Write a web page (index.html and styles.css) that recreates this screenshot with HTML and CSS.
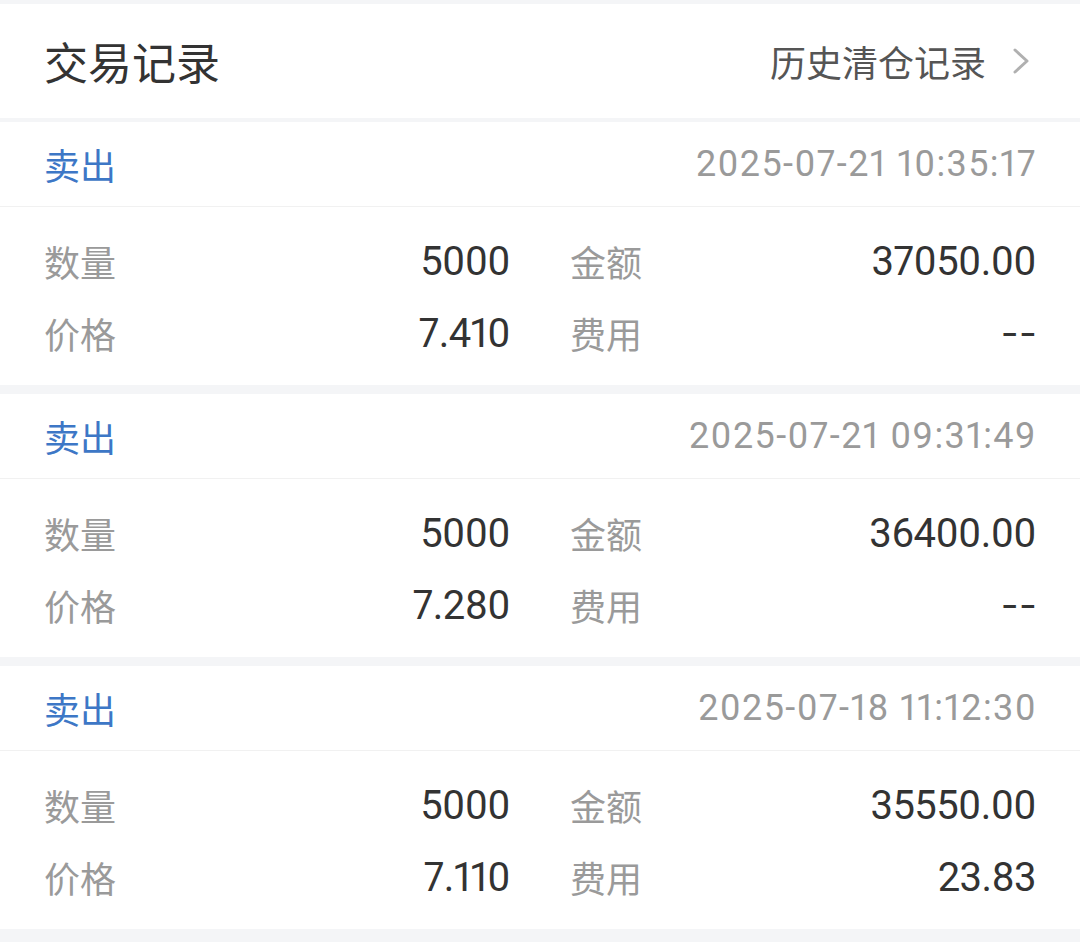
FILE: index.html
```html
<!DOCTYPE html>
<html lang="zh-CN">

<head>
    <title>交易记录</title>
    <meta charset="utf-8">
    <meta name="viewport" content="width=device-width, initial-scale=1">
    <link rel="stylesheet" href="styles.css">
</head>

<body>
    <div class="page">
        <div class="header">
            <h1>交易记录</h1>
            <a class="history" href="#">
                <span>历史清仓记录</span>
                <svg width="18" height="26" viewBox="0 0 18 26">
                    <polyline points="3,2 15,13 3,24" fill="none" stroke="#b0b0b0" stroke-width="3" stroke-linecap="round" stroke-linejoin="round" />
                </svg>
            </a>
        </div>

        <div class="card">
            <div class="card-top">
                <span class="side">卖出</span>
                <span class="time">2025-07-21 10:35:17</span>
            </div>
            <div class="card-body">
                <div class="cell"><span class="label">数量</span><span class="value">5000</span></div>
                <div class="cell"><span class="label">金额</span><span class="value">37050.00</span></div>
                <div class="cell"><span class="label">价格</span><span class="value">7.410</span></div>
                <div class="cell"><span class="label">费用</span><span class="value empty">--</span></div>
            </div>
        </div>

        <div class="card">
            <div class="card-top">
                <span class="side">卖出</span>
                <span class="time">2025-07-21 09:31:49</span>
            </div>
            <div class="card-body">
                <div class="cell"><span class="label">数量</span><span class="value">5000</span></div>
                <div class="cell"><span class="label">金额</span><span class="value">36400.00</span></div>
                <div class="cell"><span class="label">价格</span><span class="value">7.280</span></div>
                <div class="cell"><span class="label">费用</span><span class="value empty">--</span></div>
            </div>
        </div>

        <div class="card">
            <div class="card-top">
                <span class="side">卖出</span>
                <span class="time">2025-07-18 11:12:30</span>
            </div>
            <div class="card-body">
                <div class="cell"><span class="label">数量</span><span class="value">5000</span></div>
                <div class="cell"><span class="label">金额</span><span class="value">35550.00</span></div>
                <div class="cell"><span class="label">价格</span><span class="value">7.110</span></div>
                <div class="cell"><span class="label">费用</span><span class="value">23.83</span></div>
            </div>
        </div>
    </div>
</body>

</html>
```

FILE: styles.css
```css
* {
    margin: 0;
    padding: 0;
    box-sizing: border-box;
}

body {
    margin: 0;
    background-color: #f4f5f7;
    color: #333;
    font-family: Roboto, "Noto Sans CJK SC", sans-serif;
    font-variant-numeric: proportional-nums;
    height: 100vh;
}

.page {
    padding-top: 4px;
}

/* Header */
.header {
    display: flex;
    justify-content: space-between;
    align-items: center;
    height: 114px;
    padding: 0 50px 0 44px;
    background-color: #fff;
    margin-bottom: 4px;
}

.header h1 {
    font-size: 44px;
    font-weight: 400;
    color: #333;
}

.history {
    display: flex;
    align-items: center;
    gap: 26px;
    color: #555;
    font-size: 36px;
    text-decoration: none;
}

.history svg {
    display: block;
}

/* Trade cards */
.card {
    background-color: #fff;
    margin-bottom: 9px;
}

.card-top {
    display: flex;
    justify-content: space-between;
    align-items: center;
    height: 85px;
    padding: 0 44px;
    border-bottom: 1px solid #f1f1f1;
}

.side {
    color: #3d77c6;
    font-size: 36px;
}

.time {
    color: #9a9a9a;
    font-size: 36px;
    letter-spacing: 1.4px;
    margin-right: -1px;
}

.card-body {
    display: grid;
    grid-template-columns: 1fr 1fr;
    column-gap: 60px;
    padding: 18px 44px 16px;
}

.cell {
    display: flex;
    justify-content: space-between;
    align-items: center;
    height: 72px;
}

.label {
    color: #9a9a9a;
    font-size: 36px;
}

.value {
    color: #333;
    font-size: 40px;
    letter-spacing: -0.6px;
}

.value.empty {
    letter-spacing: 3px;
    margin-right: -3px;
    transform: scaleX(1.3);
    transform-origin: right center;
}
```
